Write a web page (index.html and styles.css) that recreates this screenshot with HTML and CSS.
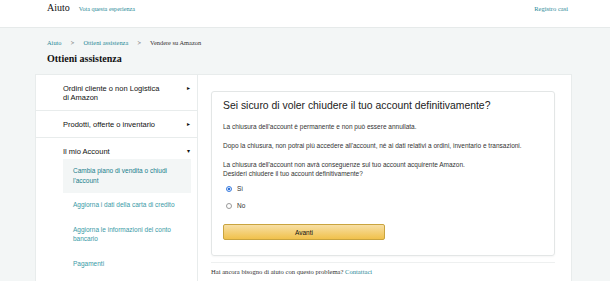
FILE: index.html
```html
<!DOCTYPE html>
<html lang="it">
<head>
	<meta charset="UTF-8">
	<title>Aiuto</title>
	<link rel="stylesheet" href="styles.css">
</head>
<body>
	<div class="header">
		<div class="brand">
			<span class="brand-name">Aiuto</span>
			<a class="brand-vote" href="#">Vota questa esperienza</a>
		</div>
		<a class="header-link" href="#">Registro casi</a>
	</div>

	<div class="page">
		<div class="crumbs">
			<a href="#">Aiuto</a>
			<span class="sep">&gt;</span>
			<a href="#">Ottieni assistenza</a>
			<span class="sep">&gt;</span>
			<span class="current">Vendere su Amazon</span>
		</div>
		<h1 class="page-title">Ottieni assistenza</h1>

		<div class="layout">
			<div class="sidebar">
				<div class="side-row">
					<span>Ordini cliente o non Logistica di Amazon</span>
					<span class="arrow">&#9656;</span>
				</div>
				<div class="side-row">
					<span>Prodotti, offerte o inventario</span>
					<span class="arrow">&#9656;</span>
				</div>
				<div class="side-row open">
					<span>Il mio Account</span>
					<span class="arrow">&#9662;</span>
				</div>
				<div class="sub-list">
					<a class="sub-item active" href="#">Cambia piano di vendita o chiudi l'account</a>
					<a class="sub-item" href="#">Aggiorna i dati della carta di credito</a>
					<a class="sub-item" href="#">Aggiorna le informazioni del conto bancario</a>
					<a class="sub-item" href="#">Pagamenti</a>
				</div>
			</div>

			<div class="main">
				<div class="card">
					<h2 class="card-title">Sei sicuro di voler chiudere il tuo account definitivamente?</h2>
					<p>La chiusura dell'account è permanente e non può essere annullata.</p>
					<p>Dopo la chiusura, non potrai più accedere all'account, né ai dati relativi a ordini, inventario e transazioni.</p>
					<p class="last">La chiusura dell'account non avrà conseguenze sul tuo account acquirente Amazon.<br>Desideri chiudere il tuo account definitivamente?</p>
					<label class="radio"><span class="dot checked"></span>Sì</label>
					<label class="radio"><span class="dot"></span>No</label>
					<button class="btn">Avanti</button>
				</div>
				<div class="help">
					Hai ancora bisogno di aiuto con questo problema? <a href="#">Contattaci</a>
				</div>
			</div>
		</div>
	</div>
</body>
</html>
```

FILE: styles.css
```css
body {
	margin: 0;
	padding: 0;
	background-color: #f3f6f6;
	font-family: "Liberation Serif", serif;
	overflow: hidden;
}
a {
	color: #2a8a98;
	text-decoration: none;
}
.header {
	height: 27px;
	display: flex;
	justify-content: space-between;
	align-items: flex-start;
	padding: 0 42px 0 47px;
	background-color: #fff;
	border-bottom: 1px solid #e6eaea;
}
.brand {
	display: flex;
	align-items: baseline;
	gap: 9px;
	padding-top: 2px;
}
.brand-name {
	font-size: 10px;
	color: #111;
}
.brand-vote {
	font-size: 6.2px;
}
.header-link {
	font-size: 6.5px;
	padding-top: 5px;
}
.page {
	padding: 0 38px 0 35px;
}
.crumbs {
	padding: 11px 0 0 12px;
	font-size: 6.4px;
	line-height: 8px;
	color: #333;
}
.crumbs .sep {
	margin: 0 7.5px;
	color: #555;
}
.page-title {
	margin: 0;
	padding: 4px 0 7px 12px;
	font-size: 10px;
	line-height: 16px;
	font-weight: bold;
	color: #111;
}
.layout {
	display: flex;
	background-color: #fff;
	border: 1px solid #e8ecec;
	border-bottom: none;
	min-height: 220px;
}
.sidebar {
	width: 161px;
	border-right: 1px solid #e8ecec;
	font-family: "Liberation Sans", Arial, sans-serif;
}
.side-row {
	display: flex;
	justify-content: space-between;
	padding: 8.5px 7px 8.5px 27px;
	font-size: 7.5px;
	line-height: 9px;
	color: #111;
	border-bottom: 1px solid #e8ecec;
}
.side-row span:first-child {
	width: 104px;
}
.side-row.open {
	border-bottom: none;
	padding-bottom: 3px;
}
.arrow {
	font-size: 6px;
}
.sub-list {
	padding: 0 6px 0 27px;
}
.sub-item {
	display: block;
	padding: 7.5px 8px 7.5px 10px;
	font-size: 6.5px;
	line-height: 9.5px;
	color: #3a9aa6;
}
.sub-item.active {
	background-color: #f3f6f6;
	color: #177e8c;
}
.main {
	flex: 1;
	padding: 16px 16px 0 13px;
	font-family: "Liberation Sans", Arial, sans-serif;
}
.card {
	border: 1px solid #e3e6e6;
	border-radius: 3px;
	padding: 7px 11px 15px 11px;
	box-shadow: 0 1px 2px rgba(0, 0, 0, 0.04);
}
.card-title {
	margin: 0 0 10px 0;
	font-size: 10.4px;
	line-height: 13px;
	font-weight: normal;
	color: #222;
}
.card p {
	margin: 0 0 10px 0;
	font-size: 6.5px;
	line-height: 9px;
	color: #333;
}
.card p.last {
	margin-bottom: 6px;
}
.radio {
	display: flex;
	align-items: center;
	gap: 5px;
	height: 9px;
	margin: 0 0 8px 3px;
	font-size: 6.5px;
	color: #333;
}
.dot {
	width: 6px;
	height: 6px;
	border: 1px solid #9a9a9a;
	border-radius: 50%;
	box-sizing: border-box;
	background-color: #fff;
}
.dot.checked {
	border-color: #3b7ee0;
	background: radial-gradient(circle, #2f72d8 45%, #d9e6fb 55%);
}
.btn {
	display: block;
	width: 162px;
	height: 16px;
	margin-top: 14px;
	border: 1px solid #c9a43f;
	border-radius: 2px;
	background: linear-gradient(#f7dfa5, #f0c14b);
	font-family: "Liberation Sans", Arial, sans-serif;
	font-size: 6.5px;
	color: #111;
}
.help {
	margin-top: 6px;
	border-top: 1px solid #eef0f0;
	padding-top: 5px;
	font-family: "Liberation Serif", serif;
	font-size: 6.6px;
	color: #333;
}
```
